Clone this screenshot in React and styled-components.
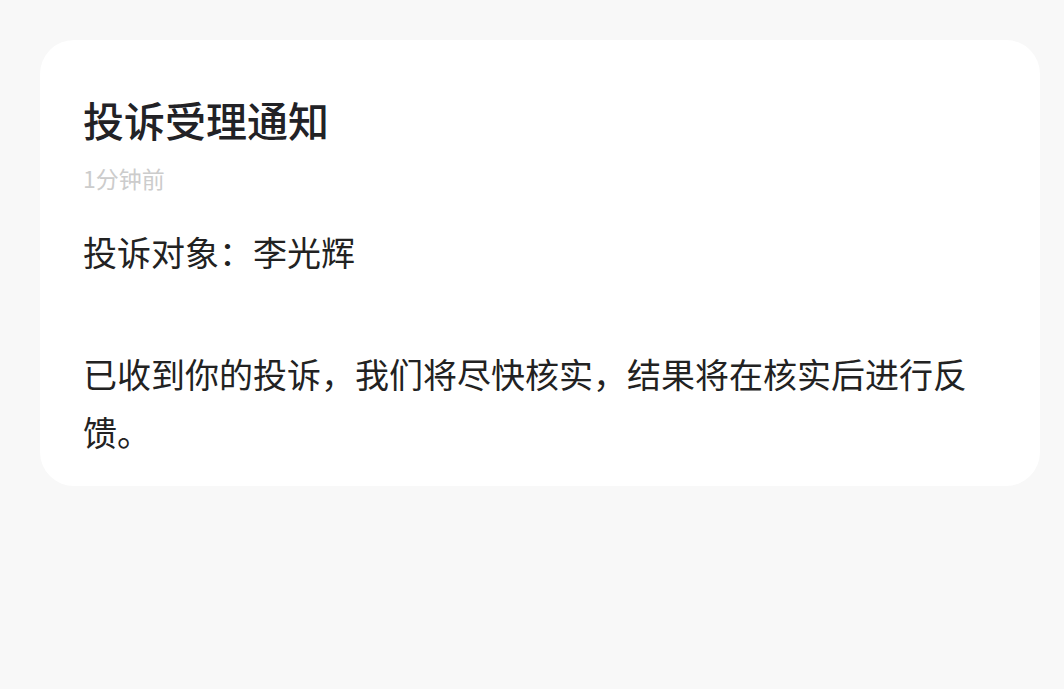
import React from 'react';
import styled, { createGlobalStyle } from 'styled-components';

const GlobalStyle = createGlobalStyle`
    html, body {
        margin: 0;
        padding: 0;
        background: #f8f8f8;
        font-family: "Noto Sans CJK SC", "Noto Sans", sans-serif;
    }
`;

export default function App() {
    const notice = {
        title: '投诉受理通知',
        time: '1分钟前',
        target: '李光辉',
        body: '已收到你的投诉，我们将尽快核实，结果将在核实后进行反馈。',
    };

    return (
        <>
            <GlobalStyle />
            <Page>
                <Card>
                    <Title>{notice.title}</Title>
                    <Time>{notice.time}</Time>
                    <Subject>投诉对象：{notice.target}</Subject>
                    <Body>{notice.body}</Body>
                </Card>
            </Page>
        </>
    );
}

const Page = styled.main`
    width: 1064px;
    height: 689px;
    box-sizing: border-box;
    padding: 40px 24px 0 40px;
    background: #f8f8f8;
`;

const Card = styled.section`
    width: 1000px;
    box-sizing: border-box;
    padding: 50px 43px 25px 43px;
    background: #ffffff;
    border-radius: 34px;
    display: flex;
    flex-direction: column;
`;

const Title = styled.h1`
    margin: 0;
    font-size: 41px;
    line-height: 58px;
    font-weight: 500;
    color: #222226;
`;

const Time = styled.span`
    margin-top: 13px;
    font-size: 23px;
    line-height: 34px;
    color: #cccccc;
`;

const Subject = styled.p`
    margin: 28px 0 0 0;
    font-size: 34px;
    line-height: 58px;
    color: #222222;
`;

const Body = styled.p`
    margin: 64px 0 0 0;
    font-size: 34px;
    line-height: 58px;
    color: #222222;
`;
